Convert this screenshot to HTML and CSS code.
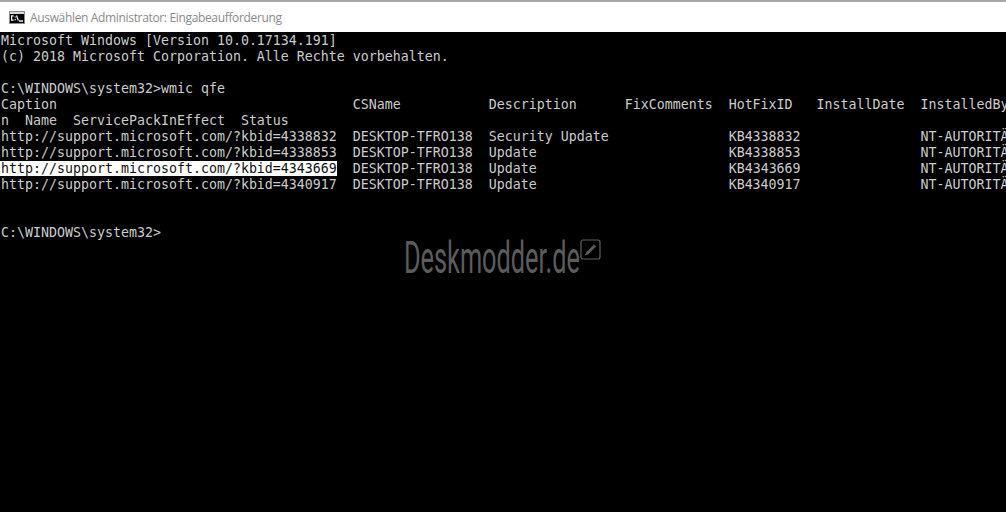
FILE: index.html
```html
<!DOCTYPE html>
<html lang="de">
<head>
<meta charset="utf-8">
<title>Eingabeaufforderung</title>
<link rel="stylesheet" href="styles.css">
</head>
<body>
<div class="window">
  <header class="titlebar">
    <svg class="cmd-icon" width="16" height="13" viewBox="0 0 16 13" aria-hidden="true">
      <rect x="0" y="0" width="16" height="13" fill="#8c8c8c"/>
      <rect x="1" y="1" width="14" height="2" fill="#d8d8d8"/>
      <rect x="1" y="3" width="14" height="9" fill="#000"/>
      <path d="M4.6 4.8H2.6v4.4h2M6.2 5.4v1M6.2 8v1.2M7.5 4.5l1.8 5M10 10h4" fill="none" stroke="#f4f4f4" stroke-width="1.3"/>
    </svg>
    <span class="title">Auswählen Administrator: Eingabeaufforderung</span>
  </header>
  <main class="console">
<pre class="screen">Microsoft Windows [Version 10.0.17134.191]
(c) 2018 Microsoft Corporation. Alle Rechte vorbehalten.

C:\WINDOWS\system32&gt;wmic qfe
Caption                                     CSName           Description      FixComments  HotFixID   InstallDate  InstalledBy
n  Name  ServicePackInEffect  Status
http://support.microsoft.com/?kbid=4338832  DESKTOP-TFRO138  Security Update               KB4338832               NT-AUTORITÄT\SYSTEM
http://support.microsoft.com/?kbid=4338853  DESKTOP-TFRO138  Update                        KB4338853               NT-AUTORITÄT\SYSTEM
<span class="selected">http://support.microsoft.com/?kbid=4343669</span>  DESKTOP-TFRO138  Update                        KB4343669               NT-AUTORITÄT\SYSTEM
http://support.microsoft.com/?kbid=4340917  DESKTOP-TFRO138  Update                        KB4340917               NT-AUTORITÄT\SYSTEM


C:\WINDOWS\system32&gt;</pre>
    <div class="watermark">
      <span class="wm-text">Deskmodder.de</span>
      <svg class="wm-icon" width="21" height="21" viewBox="0 0 21 21" aria-hidden="true">
        <rect x="1" y="1" width="19" height="19" rx="2" fill="none" stroke="#606060" stroke-width="1.2"/>
        <path d="M5 16.5l1-3 8-8 2 2-8 8z" fill="#5c5c5c"/>
      </svg>
    </div>
  </main>
</div>
</body>
</html>
```
FILE: styles.css
```css
* { box-sizing: border-box; }
html, body { margin: 0; height: 100%; background: #000; overflow: hidden; }
.window { display: flex; flex-direction: column; width: 1006px; height: 512px; }
.titlebar {
  flex: none; height: 32px; display: flex; align-items: center; gap: 5px;
  padding: 0 0 0 9px; background: #fff; border-top: 2px solid #a6a6a6;
}
.cmd-icon { flex: none; }
.title { font: 12px "Open Sans", sans-serif; letter-spacing: -.34px; color: #8a8a8a; white-space: nowrap; }
.console { position: relative; flex: 1; background: #000; overflow: hidden; padding: 1px 0 0 1px; }
.screen {
  margin: 0; font: 13.29px/16px "DejaVu Sans Mono", monospace; color: #cccccc;
  white-space: pre;
}
.selected { background: #fff; color: #111; box-shadow: -1px 0 0 #fff; }
.watermark { position: absolute; left: 404px; top: 201px; width: 200px; height: 50px; }
.wm-text {
  position: absolute; left: 0; top: 0; font: 400 44px/50px Roboto, sans-serif; color: #5c5c5c;
  transform: scaleX(.575); transform-origin: 0 0; white-space: nowrap;
}
.wm-icon { position: absolute; left: 176px; top: 6px; }
```
